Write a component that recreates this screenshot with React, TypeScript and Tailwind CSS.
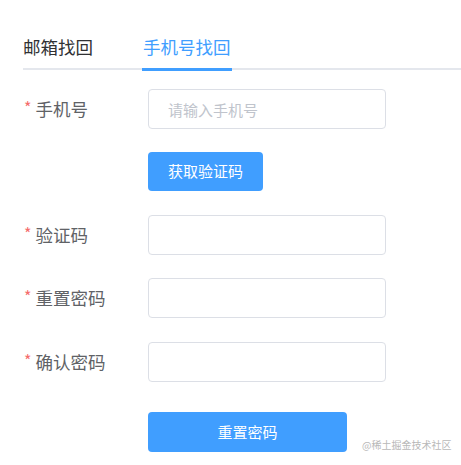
import React from "react";

const font = { fontFamily: '"Noto Sans CJK SC", "Noto Sans", sans-serif' };

function Label({ text }: { text: string }) {
  return (
    <div className="w-[125px] h-10 flex items-center text-[17.5px] text-[#606266] shrink-0">
      <span className="text-[#f56c6c] mr-[4px] text-[16px] leading-none self-center -mt-[4px] ml-[1px]">*</span>
      <span>{text}</span>
    </div>
  );
}

function Input({ placeholder }: { placeholder?: string }) {
  return (
    <input
      placeholder={placeholder}
      className="w-[238px] h-10 border border-[#dcdfe6] rounded-[4px] pl-[19px] text-[15px] text-[#606266] placeholder:text-[#c0c4cc] outline-none bg-white"
      style={font}
    />
  );
}

export default function App() {
  return (
    <div className="relative w-[461px] h-[465px] bg-white overflow-hidden" style={font}>
      <div className="pl-[23px] pt-[26px]">
        <div className="flex h-[44px] border-b-[2px] border-[#e4e7ed] relative">
          <div className="h-[42px] flex items-center text-[17.5px] text-[#303133]">邮箱找回</div>
          <div className="relative h-[42px] flex items-center text-[17.5px] text-[#409eff] ml-[50px]">
            手机号找回
            <div className="absolute left-[-1px] right-[-1px] bottom-[-3px] h-[3px] bg-[#409eff]" />
          </div>
        </div>
        <div className="mt-[19px] flex flex-col">
          <div className="flex h-10 mb-[23px]">
            <Label text="手机号" />
            <Input placeholder="请输入手机号" />
          </div>
          <div className="flex h-10 mb-[23px]">
            <div className="w-[125px] shrink-0" />
            <button className="h-[39px] px-[20px] bg-[#409eff] text-white text-[15px] rounded-[4px]" style={font}>
              获取验证码
            </button>
          </div>
          <div className="flex h-10 mb-[23px]">
            <Label text="验证码" />
            <Input />
          </div>
          <div className="flex h-10 mb-[24px]">
            <Label text="重置密码" />
            <Input />
          </div>
          <div className="flex h-10 mb-[30px]">
            <Label text="确认密码" />
            <Input />
          </div>
          <div className="flex h-10">
            <div className="w-[125px] shrink-0" />
            <button className="w-[199px] h-10 bg-[#409eff] text-white text-[15px] rounded-[4px]" style={font}>
              重置密码
            </button>
          </div>
        </div>
      </div>
      <div className="absolute left-[362px] top-[440px] text-[10px] text-[#b8b8b8] leading-none">@稀土掘金技术社区</div>
    </div>
  );
}
